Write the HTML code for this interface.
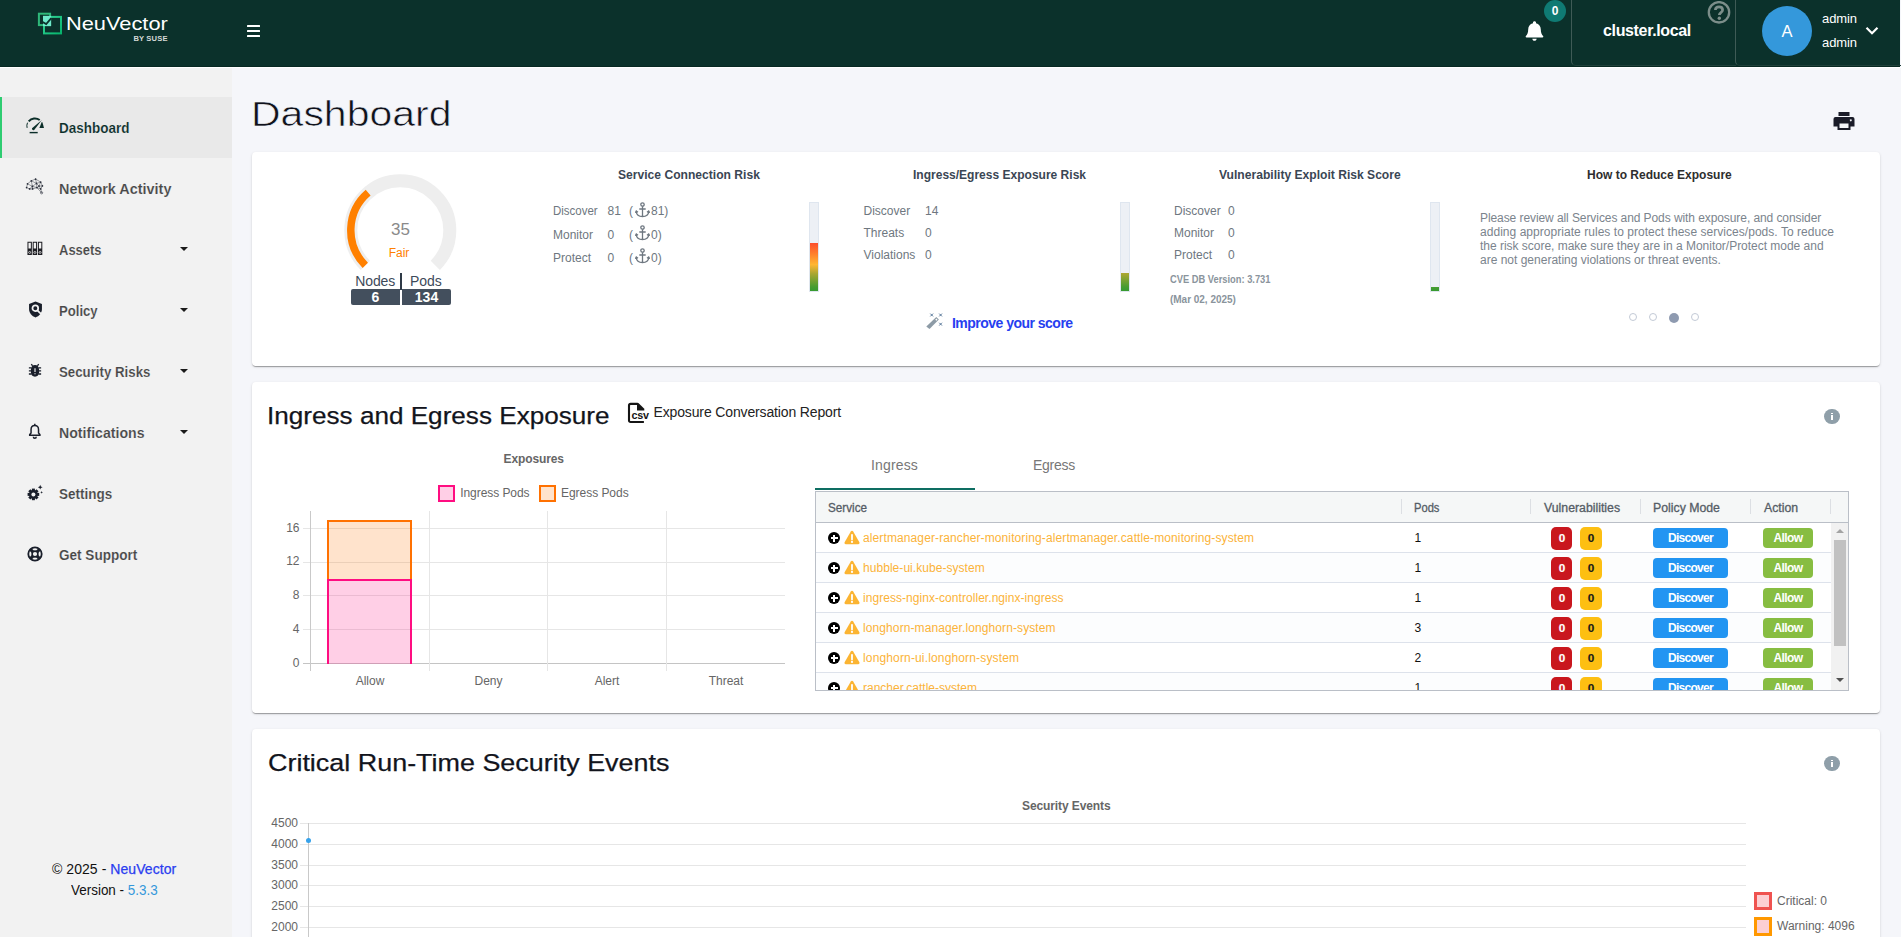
<!DOCTYPE html>
<html lang="en">
<head>
<meta charset="utf-8">
<title>NeuVector - Dashboard</title>
<style>
*{box-sizing:border-box;margin:0;padding:0}
html,body{width:1901px;height:937px;overflow:hidden;background:#f5f6fa;font-family:"Liberation Sans",sans-serif;color:#333}
.a{position:absolute;white-space:nowrap;line-height:1}
#hdr{position:absolute;left:0;top:0;width:1900px;height:67px;background:#0b312b;border-bottom:1px solid #072822}
#side{position:absolute;left:0;top:67px;width:232px;height:870px;background:#f2f2f2}
.card{position:absolute;left:252px;width:1628px;background:#fff;border-radius:4px;box-shadow:0 2px 1px -1px rgba(0,0,0,.2),0 1px 1px 0 rgba(0,0,0,.14),0 1px 3px 0 rgba(0,0,0,.12)}
.nav{position:absolute;left:0;width:232px;height:61px}
.nav .t{-webkit-text-stroke:.15px #f2f2f2;position:absolute;font-size:14.4px;font-weight:bold;color:#474747;line-height:1;white-space:nowrap}
.nav svg{position:absolute}
.caret{position:absolute;left:180.200px;top:27.800px;width:0;height:0;border-left:4.300px solid transparent;border-right:4.300px solid transparent;border-top:4.600px solid #1a1a1a}

.h13{font-size:13px;font-weight:bold;color:#3a4654}
.lb{font-size:12px;color:#6e7780}
.bar{position:absolute;top:202px;width:10px;height:90px;background:#edf0f5;border:1px solid #dfe6ef}
.bar i{position:absolute;left:0;bottom:0;width:8px;display:block;overflow:hidden}
.bar i b{position:absolute;left:0;bottom:0;width:8px;height:48px;display:block;background:linear-gradient(to top,#379a31 0%,#459c31 8%,#a9a631 36%,#ffb631 55%,#ff832b 76%,#fc4e2c 100%)}
.anc{position:absolute}

.ct{font-size:12px;color:#666}
.gl{position:absolute;background:#e6e6e6}
.th{position:absolute;font-size:12px;color:#555d66;white-space:nowrap;line-height:1;-webkit-text-stroke:.3px #555d66}
.sep{position:absolute;top:499px;width:1px;height:15px;background:#dcdfe3}
.row{position:absolute;left:816px;width:1015px;height:30px;border-bottom:1px solid #dde2eb;background:#fff}
.row.e{background:#fcfdfe}
.row .n{position:absolute;left:47px;top:9px;font-size:12px;color:#fbb339;white-space:nowrap;line-height:1}
.row .pl{position:absolute;left:12px;top:9px;width:12px;height:12px;border-radius:6px;background:#000}
.row .pl:before{content:"";position:absolute;left:2.500px;top:5px;width:7px;height:2px;background:#fff}
.row .pl:after{content:"";position:absolute;left:5px;top:2.500px;width:2px;height:7px;background:#fff}
.row svg{position:absolute;left:28px;top:7px}
.row .pd{position:absolute;left:598.500px;top:9px;font-size:12px;color:#111;line-height:1}
.row .r{position:absolute;left:735px;top:4px;width:21px;height:23px;border-radius:5px;background:#c9171e;color:#fff;font-size:10.500px;font-weight:bold;text-align:center;line-height:23px;-webkit-text-stroke:.15px currentColor}
.row .y{position:absolute;left:764px;top:4px;width:22px;height:23px;border-radius:5px;background:#fdbf12;color:#1a1a1a;font-size:10.500px;font-weight:bold;text-align:center;line-height:23px;-webkit-text-stroke:.15px currentColor}
.row .d{position:absolute;left:837px;top:5px;width:75px;height:20px;border-radius:4px;background:#2295f2;color:#fff;font-size:12px;font-weight:bold;text-align:center;line-height:21.500px;letter-spacing:-.7px}
.row .al{position:absolute;left:947px;top:5px;width:50px;height:20px;border-radius:4px;background:#87bd41;color:#fff;font-size:12px;font-weight:bold;text-align:center;line-height:21.500px;letter-spacing:-.55px}
.row .r b,.row .y b{display:inline-block;transform:scaleX(1.12)}
</style>
</head>
<body>
<!-- HEADER -->
<div id="hdr">
<svg class="a" style="left:36px;top:11px" width="28" height="25" viewBox="0 0 28 25"><defs><linearGradient id="lgg" x1="0" y1="0" x2="1" y2="1"><stop offset="0" stop-color="#35d69a"/><stop offset="1" stop-color="#06b46c"/></linearGradient></defs>
<rect x="2.900" y="2.700" width="11.200" height="11.400" fill="none" stroke="#2fb87a" stroke-width="2"/>
<rect x="8" y="5.900" width="17" height="16.500" fill="none" stroke="url(#lgg)" stroke-width="2"/>
<rect x="7" y="4.900" width="8.100" height="10.200" fill="#6fe8cb"/>
<path d="M5.300 10.200L10.200 13L15.300 7.200" fill="none" stroke="#0b312b" stroke-width="1.800"/>
</svg>
<div class="a" id="lg1" style="left:65.50px;top:14.80px;font-size:18.6px;color:#fff;transform-origin:0 50%;transform:scaleX(1.1725)">NeuVector</div>
<div class="a" id="lg2" style="left:133.40px;top:34.80px;font-size:7.6px;font-weight:bold;color:#d5dad8;letter-spacing:0.15px">BY SUSE</div>
<div class="a" style="left:247px;top:25px;width:13px;height:2px;background:#fff;border-radius:.5px"></div>
<div class="a" style="left:247px;top:29.8px;width:13px;height:2px;background:#fff;border-radius:.5px"></div>
<div class="a" style="left:247px;top:34.7px;width:13px;height:2px;background:#fff;border-radius:.5px"></div>
<svg class="a" style="left:1525px;top:20px" width="19" height="22" viewBox="0 0 19 22"><path d="M9.5 1.2c-.9 0-1.5.6-1.5 1.4v.6C5 3.9 3.2 6.400 3.200 9.500c0 3.600-1 5.200-2.300 6.500-.5.500-.2 1.500.600 1.500h16c.8 0 1.100-1 .600-1.500-1.300-1.300-2.300-2.900-2.300-6.500 0-3.100-1.800-5.600-4.800-6.300v-.600c0-.8-.6-1.400-1.500-1.400zM7.300 18.700c.1 1.200 1 2.100 2.200 2.100s2.100-.9 2.200-2.100z" fill="#fff"/></svg>
<div class="a" style="left:1544px;top:0px;width:22px;height:22px;border-radius:11px;background:#0f7a73;color:#fff;font-size:12px;font-weight:bold;text-align:center;line-height:22px">0</div>
<div class="a" style="left:1571px;top:-4px;width:165px;height:70px;border-left:1px solid #3f5b56;border-bottom:1px solid #1f403a;border-bottom-left-radius:5px"></div>
<div class="a" style="left:1735px;top:-4px;width:170px;height:70px;border-left:1px solid #3f5b56;border-bottom:1px solid #1f403a;border-bottom-left-radius:5px"></div>
<div class="a" id="cl" style="left:1603px;top:23px;font-size:16px;font-weight:bold;color:#fff;letter-spacing:-.35px">cluster.local</div>
<svg class="a" style="left:1707px;top:.7px" width="24" height="24" viewBox="0 0 24 24"><circle cx="12" cy="11.300" r="10.200" fill="none" stroke="#7c8e8a" stroke-width="2.300"/><path d="M8.400 9.100c0-2 1.500-3.300 3.600-3.300s3.600 1.200 3.600 3.100c0 2.400-3.300 2.700-3.300 5.200" fill="none" stroke="#7c8e8a" stroke-width="2.700"/><circle cx="12.300" cy="17.300" r="1.700" fill="#7c8e8a"/></svg>
<div class="a" style="left:1762px;top:6px;width:50px;height:50px;border-radius:25px;background:#3498db;color:#fff;font-size:16.500px;text-align:center;line-height:50px">A</div>
<div class="a" id="ad1" style="left:1822px;top:12px;font-size:13px;color:#fff;letter-spacing:-0.08px">admin</div>
<div class="a" id="ad2" style="left:1822px;top:36px;font-size:13px;color:#fff;letter-spacing:-0.08px">admin</div>
<svg class="a" style="left:1865px;top:26px" width="14" height="10" viewBox="0 0 14 10"><path d="M1.500 1.800L7 7.300L12.500 1.800" fill="none" stroke="#fff" stroke-width="2.200"/></svg>
</div>
<div class="a" style="left:0;top:67px;width:1901px;height:1px;background:#fff;z-index:5"></div>
<!-- SIDEBAR -->
<div id="side">
<div class="nav" style="top:30px;background:#e9e9e9;border-left:2px solid #2ecc71">
<svg style="left:22.100px;top:19.600px" width="21" height="18" viewBox="0 0 21 18"><path d="M4.700 4.300A8 8 0 0 1 15.700 3" fill="none" stroke="#0b2e29" stroke-width="2"/><path d="M3.500 5.700A8 8 0 0 0 3.100 10.900" fill="none" stroke="#0b2e29" stroke-width="1"/><path d="M17.700 4.900L18.400 5.200L20 10.900H15.400z" fill="#0b2e29"/><path d="M8 11.200L17.800 2.900L10.200 12.900A1.500 1.500 0 0 1 8 11.200z" fill="#0b2e29"/><path d="M5.600 15.600h8.100" stroke="#0b2e29" stroke-width="1.400"/></svg>
<div class="t" id="nv0" style="-webkit-text-stroke:.15px #e9e9e9;left:57.00px;top:24px;color:#0b2e29;transform-origin:0 50%;transform:scaleX(0.9360)">Dashboard</div></div>
<div class="nav" style="top:91px">
<svg style="left:25px;top:19px" width="20" height="20" viewBox="0 0 20 20"><path d="M10.6 2.1L6.3 3.8M10.6 2.1L15.7 5.1M10.6 2.1L11.5 6.4M6.3 3.8L2.5 6.8M6.3 3.8L11.5 6.4M6.3 3.8L7.4 9.4M15.7 5.1L11.5 6.4M15.7 5.1L17.4 8.9M15.7 5.1L14.0 9.1M2.5 6.8L7.4 9.4M2.5 6.8L1.6 10.6M11.5 6.4L14.0 9.1M11.5 6.4L7.4 9.4M11.5 6.4L11.9 10.6M17.4 8.9L14.0 9.1M17.4 8.9L15.7 11.9M14.0 9.1L11.9 10.6M14.0 9.1L15.7 11.9M7.4 9.4L11.9 10.6M7.4 9.4L4.6 11.9M7.4 9.4L7.6 11.9M1.6 10.6L4.6 11.9M11.9 10.6L7.6 11.9M11.9 10.6L15.7 11.9M4.6 11.9L7.6 11.9M15.7 11.9L16.6 15.8M11.9 10.6L16.6 15.8" fill="none" stroke="#4a4e58" stroke-width=".550"/><g fill="#2a2e3a"><circle cx="10.6" cy="2.1" r=".850"/><circle cx="6.3" cy="3.8" r=".850"/><circle cx="15.7" cy="5.1" r=".850"/><circle cx="2.5" cy="6.8" r=".850"/><circle cx="11.5" cy="6.4" r=".850"/><circle cx="17.4" cy="8.9" r=".850"/><circle cx="14.0" cy="9.1" r=".850"/><circle cx="7.4" cy="9.4" r=".850"/><circle cx="1.6" cy="10.6" r=".850"/><circle cx="11.9" cy="10.6" r=".850"/><circle cx="4.6" cy="11.9" r=".850"/><circle cx="7.6" cy="11.9" r=".850"/><circle cx="15.7" cy="11.9" r=".850"/></g><circle cx="16.600" cy="15.800" r="1.100" fill="none" stroke="#2a2e3a" stroke-width=".600"/></svg>
<div class="t" id="nv1" style="left:59.00px;top:24px;transform-origin:0 50%;transform:scaleX(1.0018)">Network Activity</div></div>
<div class="nav" style="top:152px">
<svg style="left:27px;top:22px" width="16.500" height="15" viewBox="0 0 18 16"><g fill="#1d1d22"><path d="M.5.500h4.800v14.500H.5zM1.600 1.600v6.400h2.600v-6.400z"/><path d="M6.200.5h4.800v14.500H6.200zM7.300 1.600v6.400h2.600v-6.400z"/><path d="M11.900.5h4.800v14.500h-4.800zM13 1.600v6.400h2.600v-6.400z"/></g><g fill="none" stroke="#f2f2f2" stroke-width=".8"><circle cx="2.900" cy="12.300" r="1.100"/><circle cx="8.600" cy="12.300" r="1.100"/><circle cx="14.300" cy="12.300" r="1.100"/></g></svg>
<div class="t" id="nv2" style="left:59.00px;top:24px;transform-origin:0 50%;transform:scaleX(0.9022)">Assets</div><div class="caret"></div></div>
<div class="nav" style="top:213px">
<svg style="left:27.500px;top:20.500px" width="15" height="17.500" viewBox="0 0 16 19"><path d="M8 .5L1 3.200v5.600c0 4.300 3 7.800 7 9.100 4-1.300 7-4.800 7-9.100V3.200z" fill="#1a1f2b"/><circle cx="7.800" cy="7.800" r="3.100" fill="none" stroke="#f2f2f2" stroke-width="1.900"/><path d="M10 10.200l4 3.800" stroke="#f2f2f2" stroke-width="1.900"/></svg>
<div class="t" id="nv3" style="left:59.00px;top:24px;transform-origin:0 50%;transform:scaleX(0.9116)">Policy</div><div class="caret"></div></div>
<div class="nav" style="top:274px">
<svg style="left:28.200px;top:22.300px" width="14" height="15" viewBox="0 0 16 17"><path d="M8 2.200c2.800 0 4.700 2.200 4.700 5.600v2.800c0 2.900-1.900 5-4.700 5s-4.700-2.100-4.700-5V7.800c0-3.400 1.900-5.600 4.700-5.600z" fill="#1a1f2b"/><path d="M1 5.500h3M1 9h3M1 12.500h3M12 5.500h3M12 9h3M12 12.500h3M5.200 3.200L3.800 1.200M10.800 3.200l1.400-2" stroke="#1a1f2b" stroke-width="1.500"/><path d="M8 6v4.200M8 11.500v1.300" stroke="#f2f2f2" stroke-width="1.300"/></svg>
<div class="t" id="nv4" style="left:58.80px;top:24px;transform-origin:0 50%;transform:scaleX(0.9213)">Security Risks</div><div class="caret"></div></div>
<div class="nav" style="top:335px">
<svg style="left:28.200px;top:21.200px" width="13.600" height="16.200" viewBox="0 0 16 19"><path d="M8 2.800c-2.700 0-4.400 2-4.400 4.800v4.200L2 13.600v.7h12v-.7l-1.600-1.800V7.600c0-2.800-1.700-4.800-4.400-4.800z" fill="none" stroke="#1a1f2b" stroke-width="1.750"/><path d="M8 .8v2M6.300 16.200a1.700 1.700 0 0 0 3.400 0" fill="none" stroke="#1a1f2b" stroke-width="1.750"/></svg>
<div class="t" id="nv5" style="left:59.00px;top:24px;transform-origin:0 50%;transform:scaleX(0.9816)">Notifications</div><div class="caret"></div></div>
<div class="nav" style="top:396px">
<svg style="left:26px;top:20px" width="18" height="18" viewBox="0 0 18 18"><g transform="translate(7.400 11.400)" fill="#1a1f2b"><circle r="4.300"/><rect x="-1.500" y="-5.800" width="3" height="11.600"/><rect x="-1.500" y="-5.800" width="3" height="11.600" transform="rotate(45)"/><rect x="-1.500" y="-5.800" width="3" height="11.600" transform="rotate(90)"/><rect x="-1.500" y="-5.800" width="3" height="11.600" transform="rotate(135)"/><circle r="2" fill="#f2f2f2"/></g><path d="M14.200 1.800l.7 1.700 1.700.7-1.700.7-.7 1.700-.7-1.700-1.700-.7 1.700-.7zM15.600 8l.4 1 1 .4-1 .4-.4 1-.4-1-1-.4 1-.4z" fill="#1a1f2b"/></svg>
<div class="t" id="nv6" style="left:59.00px;top:24px;transform-origin:0 50%;transform:scaleX(0.9370)">Settings</div></div>
<div class="nav" style="top:457px">
<svg style="left:26.200px;top:20.700px" width="18" height="18" viewBox="0 0 18 18"><circle cx="9" cy="9" r="6.700" fill="none" stroke="#1a1f2b" stroke-width="1.800"/><circle cx="9" cy="9" r="2.900" fill="none" stroke="#1a1f2b" stroke-width="1.600"/><path d="M4.200 4.200l2.700 2.700M13.800 4.200l-2.700 2.700M4.200 13.800l2.700-2.700M13.800 13.800l-2.700-2.700" stroke="#1a1f2b" stroke-width="3.100"/></svg>
<div class="t" id="nv7" style="left:59.00px;top:24px;transform-origin:0 50%;transform:scaleX(0.9422)">Get Support</div></div>
<div class="a" id="ft1" style="left:52px;top:795px;font-size:14px;color:#111;letter-spacing:0.06px">© 2025 - <span style="color:#2a3df0;-webkit-text-stroke:.25px #2a3df0">NeuVector</span></div>
<div class="a" id="ft2" style="left:71px;top:816px;font-size:14px;color:#111;transform-origin:0 50%;transform:scaleX(0.9600)">Version - <span style="color:#3498db">5.3.3</span></div>
</div>
<!-- MAIN -->
<div id="main">
<div class="a" id="ttl" style="-webkit-text-stroke:.6px #f5f6fa;left:251.20px;top:96.70px;font-size:34.500px;color:#10121c;transform-origin:0 50%;transform:scaleX(1.1878)">Dashboard</div>
<svg class="a" style="left:1833px;top:111px" width="22" height="20" viewBox="0 0 22 20"><path d="M5.500 1h11v4h-11zM2.500 6h17a2 2 0 0 1 2 2v7.500h-4V19h-13v-3.500h-4V8a2 2 0 0 1 2-2zM6.500 12.500V17h9v-4.500zM17.800 8.300a1 1 0 1 0 .01 0z" fill="#1a1c28" fill-rule="evenodd"/></svg>

<!-- CARD 1 -->
<div class="card" style="top:152px;height:214px"></div>
<svg class="a" style="left:340px;top:170px" width="122" height="122" viewBox="0 0 122 122"><path id="gtrack" d="M25.300 95.300A49.500 49.500 0 1 1 95.300 95.300" fill="none" stroke="#eeeeee" stroke-width="13"/><path d="M25.300 95.300A49.500 49.500 0 0 1 28.150 22.670" fill="none" stroke="#ff8000" stroke-width="7.500"/></svg>
<div class="a" id="g35" style="left:391px;top:220.60px;font-size:17px;color:#8a8a8a">35</div>
<div class="a" id="gfair" style="left:388.70px;top:247px;font-size:12px;color:#ff8000;letter-spacing:0.00px">Fair</div>
<div class="a" id="nodes" style="left:355.30px;top:274px;font-size:14px;color:#3d4a5a;letter-spacing:-0.15px">Nodes</div>
<div class="a" id="pods" style="left:410.00px;top:274px;font-size:14px;color:#3d4a5a;letter-spacing:-0.03px">Pods</div>
<div class="a" style="left:400px;top:273px;width:2px;height:17px;background:#2f3a47"></div>
<div class="a" style="left:351px;top:289px;width:49px;height:16px;background:#434f5d;border-radius:2px 0 0 2px;color:#fff;font-size:14px;font-weight:bold;text-align:center;line-height:16px">6</div>
<div class="a" style="left:402px;top:289px;width:49px;height:16px;background:#434f5d;border-radius:0 2px 2px 0;color:#fff;font-size:14px;font-weight:bold;text-align:center;line-height:16px">134</div>

<div class="a h13" id="h1" style="left:618px;top:168px;transform-origin:0 50%;transform:scaleX(0.9307)">Service Connection Risk</div>
<div class="a lb" id="s1a" style="left:553.20px;top:205px;transform-origin:0 50%;transform:scaleX(0.9575)">Discover</div><div class="a lb" style="left:607.500px;top:205px">81</div><div class="a lb" style="left:629px;top:205px">(</div><svg class="anc" style="left:634.5px;top:201.5px" width="15" height="16" viewBox="0 0 15 16" fill="none" stroke="#6e7780" stroke-width="1.300"><circle cx="7.500" cy="2.500" r="1.700"/><path d="M7.500 4.200V14.500M4.300 7h6.400M1.200 9.500c.3 3 2.800 5 6.300 5s6-2 6.300-5M.3 10.800l1-1.800 1.700 1.200M14.700 10.800l-1-1.800-1.700 1.200"/></svg><div class="a lb" style="left:651px;top:205px">81)</div>
<div class="a lb" id="s1b" style="left:553px;top:228.500px">Monitor</div><div class="a lb" style="left:607.500px;top:228.500px">0</div><div class="a lb" style="left:629px;top:228.500px">(</div><svg class="anc" style="left:634.5px;top:225px" width="15" height="16" viewBox="0 0 15 16" fill="none" stroke="#6e7780" stroke-width="1.300"><circle cx="7.500" cy="2.500" r="1.700"/><path d="M7.500 4.200V14.500M4.300 7h6.400M1.200 9.500c.3 3 2.800 5 6.300 5s6-2 6.300-5M.3 10.800l1-1.800 1.700 1.200M14.700 10.800l-1-1.800-1.700 1.200"/></svg><div class="a lb" style="left:651px;top:228.500px">0)</div>
<div class="a lb" id="s1c" style="left:553px;top:251.500px">Protect</div><div class="a lb" style="left:607.500px;top:251.500px">0</div><div class="a lb" style="left:629px;top:251.500px">(</div><svg class="anc" style="left:634.5px;top:248px" width="15" height="16" viewBox="0 0 15 16" fill="none" stroke="#6e7780" stroke-width="1.300"><circle cx="7.500" cy="2.500" r="1.700"/><path d="M7.500 4.200V14.500M4.300 7h6.400M1.200 9.500c.3 3 2.800 5 6.300 5s6-2 6.300-5M.3 10.800l1-1.800 1.700 1.200M14.700 10.800l-1-1.800-1.700 1.200"/></svg><div class="a lb" style="left:651px;top:251.500px">0)</div>
<div class="bar" style="left:809px"><i style="height:48px"><b></b></i></div>

<div class="a h13" id="h2" style="left:913px;top:168px;transform-origin:0 50%;transform:scaleX(0.9244)">Ingress/Egress Exposure Risk</div>
<div class="a lb" id="s2a" style="left:863.500px;top:205px">Discover</div><div class="a lb" style="left:925px;top:205px">14</div>
<div class="a lb" id="s2b" style="left:863.500px;top:227px">Threats</div><div class="a lb" style="left:925px;top:227px">0</div>
<div class="a lb" id="s2c" style="left:863.500px;top:249px">Violations</div><div class="a lb" style="left:925px;top:249px">0</div>
<div class="bar" style="left:1120px"><i style="height:18px"><b></b></i></div>
<svg class="a" style="left:924px;top:310px" width="20" height="22" viewBox="0 0 20 22"><path d="M2.300 16.500L12.300 7L14.900 9.600L5.500 18.900z" fill="#8d9ba6"/><rect x="11.600" y="8.900" width="1.600" height="1.600" fill="#fff" transform="rotate(45 12.400 9.700)"/><path d="M6.200 3.500l3 3M9.200 3.500l-3 3M15.100 3.500l3 3M18.100 3.500l-3 3M15.100 12.700l3 3M18.100 12.700l-3 3" stroke="#7f97b0" stroke-width="1"/><rect x="6.900" y="4.200" width="1.600" height="1.600" fill="#6d89a8"/><rect x="15.800" y="4.200" width="1.600" height="1.600" fill="#6d89a8"/><rect x="15.800" y="13.400" width="1.600" height="1.600" fill="#6d89a8"/></svg>
<div class="a" id="imp" style="left:952.00px;top:316.30px;font-size:14px;font-weight:bold;color:#2640f0;letter-spacing:-0.52px">Improve your score</div>

<div class="a h13" id="h3" style="left:1219px;top:168px;transform-origin:0 50%;transform:scaleX(0.9303)">Vulnerability Exploit Risk Score</div>
<div class="a lb" id="s3a" style="left:1174px;top:205px">Discover</div><div class="a lb" style="left:1228px;top:205px">0</div>
<div class="a lb" id="s3b" style="left:1174px;top:227px">Monitor</div><div class="a lb" style="left:1228px;top:227px">0</div>
<div class="a lb" id="s3c" style="left:1174px;top:249px">Protect</div><div class="a lb" style="left:1228px;top:249px">0</div>
<div class="a" id="cve1" style="left:1170px;top:274.50px;font-size:10px;font-weight:bold;color:#8a949c;transform-origin:0 50%;transform:scaleX(0.9315)">CVE DB Version: 3.731</div>
<div class="a" id="cve2" style="left:1170px;top:295px;font-size:10px;font-weight:bold;color:#8a949c;letter-spacing:-0.02px">(Mar 02, 2025)</div>
<div class="bar" style="left:1430px"><i style="height:4px"><b></b></i></div>

<div class="a h13" id="h4" style="left:1587px;top:168px;color:#2e2e2e;transform-origin:0 50%;transform:scaleX(0.9236)">How to Reduce Exposure</div>
<div class="a" id="p1" style="left:1480px;top:212px;font-size:12px;color:#7b848d;line-height:1;letter-spacing:-0.08px">Please review all Services and Pods with exposure, and consider</div>
<div class="a" id="p2" style="left:1480px;top:226px;font-size:12px;color:#7b848d;line-height:1;letter-spacing:0.04px">adding appropriate rules to protect these services/pods. To reduce</div>
<div class="a" id="p3" style="left:1480px;top:240px;font-size:12px;color:#7b848d;line-height:1;letter-spacing:-0.02px">the risk score, make sure they are in a Monitor/Protect mode and</div>
<div class="a" id="p4" style="left:1480px;top:254px;font-size:12px;color:#7b848d;line-height:1">are not generating violations or threat events.</div>
<div class="a" style="left:1629px;top:313px;width:8px;height:8px;border-radius:4px;border:1px solid #c3cad6"></div>
<div class="a" style="left:1649px;top:313px;width:8px;height:8px;border-radius:4px;border:1px solid #c3cad6"></div>
<div class="a" style="left:1669px;top:312.500px;width:10px;height:10px;border-radius:5px;background:#8e9ab0"></div>
<div class="a" style="left:1691px;top:313px;width:8px;height:8px;border-radius:4px;border:1px solid #c3cad6"></div>

<!-- CARD 2 -->
<div class="card" style="top:382px;height:331px"></div>
<div class="a" id="t2" style="-webkit-text-stroke:.25px #12141c;left:267.40px;top:404.00px;font-size:24.500px;color:#12141c;transform-origin:0 50%;transform:scaleX(1.0658)">Ingress and Egress Exposure</div>
<svg class="a" style="left:626px;top:401px" width="26" height="24" viewBox="0 0 26 24"><path d="M17.900 21H4.600Q3 21 3 19.400V4.500Q3 2.900 4.600 2.900H11.800" fill="none" stroke="#151515" stroke-width="2.100"/><path d="M11 1.900h1.400l5.900 5.900v1.700H11z" fill="#151515"/><text x="5.600" y="17.800" font-family="Liberation Sans,sans-serif" font-size="10.800" font-weight="bold" fill="#151515" letter-spacing="-.35">csv</text></svg>
<div class="a" id="ecr" style="left:653.500px;top:404.80px;font-size:14px;color:#222;letter-spacing:-0.14px">Exposure Conversation Report</div>
<div class="a" style="left:1824.4px;top:408.7px;width:15.400px;height:15.400px;border-radius:8px;background:#8f9fa9"></div><div class="a" style="left:1831.1px;top:412.8px;width:2.200px;height:1.700px;background:#fff"></div><div class="a" style="left:1831.1px;top:415.4px;width:2.200px;height:4.700px;background:#fff"></div>

<div class="a ct" id="exp" style="left:503.60px;top:453px;font-weight:bold;letter-spacing:-0.12px">Exposures</div>
<div class="a" style="left:438px;top:485px;width:17px;height:17px;border:2px solid #ff0d81;background:#ffcfe6"></div>
<div class="a ct" id="lg_i" style="left:460.20px;top:487px;letter-spacing:-0.06px">Ingress Pods</div>
<div class="a" style="left:539px;top:485px;width:17px;height:17px;border:2px solid #ff7101;background:#ffe3cc"></div>
<div class="a ct" id="lg_e" style="left:561.00px;top:487px;letter-spacing:-0.04px">Egress Pods</div>
<!-- grid -->
<div class="gl" style="left:303px;top:528px;width:482px;height:1px"></div>
<div class="gl" style="left:303px;top:562px;width:482px;height:1px"></div>
<div class="gl" style="left:303px;top:595px;width:482px;height:1px"></div>
<div class="gl" style="left:303px;top:629px;width:482px;height:1px"></div>
<div class="gl" style="left:303px;top:663px;width:482px;height:1px;background:#c4c4c4"></div>
<div class="gl" style="left:310px;top:511px;width:1px;height:160px;background:#c9c9c9"></div>
<div class="gl" style="left:429px;top:511px;width:1px;height:160px"></div>
<div class="gl" style="left:547px;top:511px;width:1px;height:160px"></div>
<div class="gl" style="left:666px;top:511px;width:1px;height:160px"></div>
<div class="a" style="left:327px;top:579px;width:85px;height:84.500px;background:rgba(255,13,129,.2);border:2px solid #ff0d81;border-bottom:0"></div>
<div class="a" style="left:327px;top:520px;width:85px;height:59px;background:rgba(255,113,1,.2);border:2px solid #ff7101;border-bottom:0"></div>
<div class="a ct" style="left:270px;width:29.500px;text-align:right;top:522px">16</div>
<div class="a ct" style="left:270px;width:29.500px;text-align:right;top:555px">12</div>
<div class="a ct" style="left:270px;width:29.500px;text-align:right;top:589px">8</div>
<div class="a ct" style="left:270px;width:29.500px;text-align:right;top:623px">4</div>
<div class="a ct" style="left:270px;width:29.500px;text-align:right;top:657px">0</div>
<div class="a ct" style="left:320px;width:100px;text-align:center;top:675px">Allow</div>
<div class="a ct" style="left:438.500px;width:100px;text-align:center;top:675px">Deny</div>
<div class="a ct" style="left:557px;width:100px;text-align:center;top:675px">Alert</div>
<div class="a ct" style="left:676px;width:100px;text-align:center;top:675px">Threat</div>

<!-- tabs + table -->
<div class="a" id="tb1" style="left:871.00px;top:458px;font-size:14px;color:#777;letter-spacing:0.15px">Ingress</div>
<div class="a" id="tb2" style="left:1032.90px;top:458px;font-size:14px;color:#777;letter-spacing:-0.22px">Egress</div>
<div class="a" style="left:815px;top:488px;width:160px;height:2.300px;background:#0e6e62"></div>
<div class="a" style="left:815px;top:491px;width:1034px;height:200px;border:1px solid #babfc7;background:#fff;overflow:hidden"></div>
<div class="a" style="left:816px;top:492px;width:1032px;height:30px;background:#f5f7f7"></div>
<div class="a" style="left:816px;top:522px;width:1032px;height:1px;background:#babfc7"></div>
<div class="th" id="th0" style="top:502.00px;left:828px;transform-origin:0 50%;transform:scaleX(0.9750)">Service</div>
<div class="th" id="th1" style="top:502.00px;left:1414px;transform-origin:0 50%;transform:scaleX(0.93)">Pods</div>
<div class="th" id="th2" style="top:502.00px;left:1544.00px;transform-origin:0 50%;transform:scaleX(1.0238)">Vulnerabilities</div>
<div class="th" id="th3" style="top:502.00px;left:1653px;transform-origin:0 50%;transform:scaleX(1.0244)">Policy Mode</div>
<div class="th" id="th4" style="top:502.00px;left:1764.00px;transform-origin:0 50%;transform:scaleX(1.0236)">Action</div>
<div class="sep" style="left:1401px"></div><div class="sep" style="left:1530px"></div><div class="sep" style="left:1640px"></div><div class="sep" style="left:1750px"></div><div class="sep" style="left:1830px"></div>
<div class="a" style="left:816px;top:523px;width:1032px;height:167px;overflow:hidden">
<div style="position:absolute;left:-816px;top:0">
<div class="row" style="top:0px"><i class="pl"></i><svg width="16" height="15" viewBox="0 0 16 15"><path d="M8 .8c.5 0 .9.300 1.200.700l6.200 10.800c.5.900-.1 2-1.200 2H1.800c-1.100 0-1.700-1.100-1.200-2L6.800 1.500C7.100 1.100 7.500.8 8 .8z" fill="#fbb432"/><path d="M8 4.800v4.600" stroke="#fff" stroke-width="1.800" stroke-linecap="round"/><circle cx="8" cy="11.900" r="1.100" fill="#fff"/></svg><span class="n" id="rn0" style="left:47px;letter-spacing:0.11px">alertmanager-rancher-monitoring-alertmanager.cattle-monitoring-system</span><span class="pd">1</span><span class="r"><b>0</b></span><span class="y"><b>0</b></span><span class="d">Discover</span><span class="al">Allow</span></div>
<div class="row e" style="top:30px"><i class="pl"></i><svg width="16" height="15" viewBox="0 0 16 15"><path d="M8 .8c.5 0 .9.300 1.200.700l6.200 10.800c.5.900-.1 2-1.200 2H1.800c-1.100 0-1.700-1.100-1.200-2L6.800 1.500C7.100 1.100 7.500.8 8 .8z" fill="#fbb432"/><path d="M8 4.800v4.600" stroke="#fff" stroke-width="1.800" stroke-linecap="round"/><circle cx="8" cy="11.900" r="1.100" fill="#fff"/></svg><span class="n" id="rn1" style="left:47px;letter-spacing:0.05px">hubble-ui.kube-system</span><span class="pd">1</span><span class="r"><b>0</b></span><span class="y"><b>0</b></span><span class="d">Discover</span><span class="al">Allow</span></div>
<div class="row" style="top:60px"><i class="pl"></i><svg width="16" height="15" viewBox="0 0 16 15"><path d="M8 .8c.5 0 .9.300 1.200.700l6.200 10.800c.5.900-.1 2-1.200 2H1.800c-1.100 0-1.700-1.100-1.200-2L6.800 1.500C7.100 1.100 7.500.8 8 .8z" fill="#fbb432"/><path d="M8 4.800v4.600" stroke="#fff" stroke-width="1.800" stroke-linecap="round"/><circle cx="8" cy="11.900" r="1.100" fill="#fff"/></svg><span class="n" id="rn2" style="left:47px;letter-spacing:0.05px">ingress-nginx-controller.nginx-ingress</span><span class="pd">1</span><span class="r"><b>0</b></span><span class="y"><b>0</b></span><span class="d">Discover</span><span class="al">Allow</span></div>
<div class="row e" style="top:90px"><i class="pl"></i><svg width="16" height="15" viewBox="0 0 16 15"><path d="M8 .8c.5 0 .9.300 1.200.700l6.200 10.800c.5.900-.1 2-1.200 2H1.800c-1.100 0-1.700-1.100-1.200-2L6.800 1.500C7.100 1.100 7.500.8 8 .8z" fill="#fbb432"/><path d="M8 4.800v4.600" stroke="#fff" stroke-width="1.800" stroke-linecap="round"/><circle cx="8" cy="11.900" r="1.100" fill="#fff"/></svg><span class="n" id="rn3" style="left:47px;letter-spacing:0.10px">longhorn-manager.longhorn-system</span><span class="pd">3</span><span class="r"><b>0</b></span><span class="y"><b>0</b></span><span class="d">Discover</span><span class="al">Allow</span></div>
<div class="row" style="top:120px"><i class="pl"></i><svg width="16" height="15" viewBox="0 0 16 15"><path d="M8 .8c.5 0 .9.300 1.200.700l6.200 10.800c.5.900-.1 2-1.200 2H1.800c-1.100 0-1.700-1.100-1.200-2L6.800 1.500C7.100 1.100 7.500.8 8 .8z" fill="#fbb432"/><path d="M8 4.800v4.600" stroke="#fff" stroke-width="1.800" stroke-linecap="round"/><circle cx="8" cy="11.900" r="1.100" fill="#fff"/></svg><span class="n" id="rn4" style="left:47px;letter-spacing:0.15px">longhorn-ui.longhorn-system</span><span class="pd">2</span><span class="r"><b>0</b></span><span class="y"><b>0</b></span><span class="d">Discover</span><span class="al">Allow</span></div>
<div class="row e" style="top:150px"><i class="pl"></i><svg width="16" height="15" viewBox="0 0 16 15"><path d="M8 .8c.5 0 .9.300 1.200.700l6.200 10.800c.5.900-.1 2-1.200 2H1.800c-1.100 0-1.700-1.100-1.200-2L6.800 1.500C7.100 1.100 7.500.8 8 .8z" fill="#fbb432"/><path d="M8 4.800v4.600" stroke="#fff" stroke-width="1.800" stroke-linecap="round"/><circle cx="8" cy="11.900" r="1.100" fill="#fff"/></svg><span class="n" id="rn5" style="left:47px;letter-spacing:0.0px">rancher.cattle-system</span><span class="pd">1</span><span class="r"><b>0</b></span><span class="y"><b>0</b></span><span class="d">Discover</span><span class="al">Allow</span></div>
</div>
<div style="position:absolute;left:1015px;top:0;width:17px;height:167px;background:#f1f1f1"></div>
<div style="position:absolute;left:1017.500px;top:17px;width:12.500px;height:106px;background:#c1c1c1"></div>
<div style="position:absolute;left:1019.500px;top:6px;width:0;height:0;border-left:4px solid transparent;border-right:4px solid transparent;border-bottom:4.500px solid #a3a3a3"></div>
<div style="position:absolute;left:1019.500px;top:155px;width:0;height:0;border-left:4px solid transparent;border-right:4px solid transparent;border-top:4.500px solid #505050"></div>
</div>

<!-- CARD 3 -->
<div class="card" style="top:729px;height:230px"></div>
<div class="a" id="t3" style="-webkit-text-stroke:.25px #12141c;left:268.00px;top:751px;font-size:24.500px;color:#12141c;transform-origin:0 50%;transform:scaleX(1.0989)">Critical Run-Time Security Events</div>
<div class="a" style="left:1824.4px;top:755.7px;width:15.400px;height:15.400px;border-radius:8px;background:#8f9fa9"></div><div class="a" style="left:1831.1px;top:759.8px;width:2.200px;height:1.700px;background:#fff"></div><div class="a" style="left:1831.1px;top:762.4px;width:2.200px;height:4.700px;background:#fff"></div>
<div class="a ct" id="sev" style="left:1022px;top:800px;font-weight:bold;letter-spacing:-.1px">Security Events</div>
<div class="gl" style="left:300px;top:823px;width:1446px;height:1px"></div>
<div class="gl" style="left:300px;top:844px;width:1446px;height:1px"></div>
<div class="gl" style="left:300px;top:865px;width:1446px;height:1px"></div>
<div class="gl" style="left:300px;top:885px;width:1446px;height:1px"></div>
<div class="gl" style="left:300px;top:906px;width:1446px;height:1px"></div>
<div class="gl" style="left:300px;top:927px;width:1446px;height:1px"></div>
<div class="gl" style="left:308px;top:823px;width:1px;height:120px;background:#c9c9c9"></div>
<div class="a" style="left:305.700px;top:837.600px;width:5.600px;height:5.600px;border-radius:3px;background:#36a2eb"></div>
<div class="a ct" style="left:260px;width:38px;text-align:right;top:817px">4500</div>
<div class="a ct" style="left:260px;width:38px;text-align:right;top:838px">4000</div>
<div class="a ct" style="left:260px;width:38px;text-align:right;top:859px">3500</div>
<div class="a ct" style="left:260px;width:38px;text-align:right;top:879px">3000</div>
<div class="a ct" style="left:260px;width:38px;text-align:right;top:900px">2500</div>
<div class="a ct" style="left:260px;width:38px;text-align:right;top:921px">2000</div>
<div class="a" style="left:1754px;top:892.400px;width:18px;height:18px;border:3px solid #ef5350;background:#fccfd3"></div>
<div class="a ct" id="lgc" style="left:1777px;top:895px">Critical: 0</div>
<div class="a" style="left:1754px;top:917.300px;width:18px;height:18.300px;border:3px solid #ff9800;background:#fccfd3"></div>
<div class="a ct" id="lgw" style="left:1777px;top:920px">Warning: 4096</div>
</div>
</body>
</html>
